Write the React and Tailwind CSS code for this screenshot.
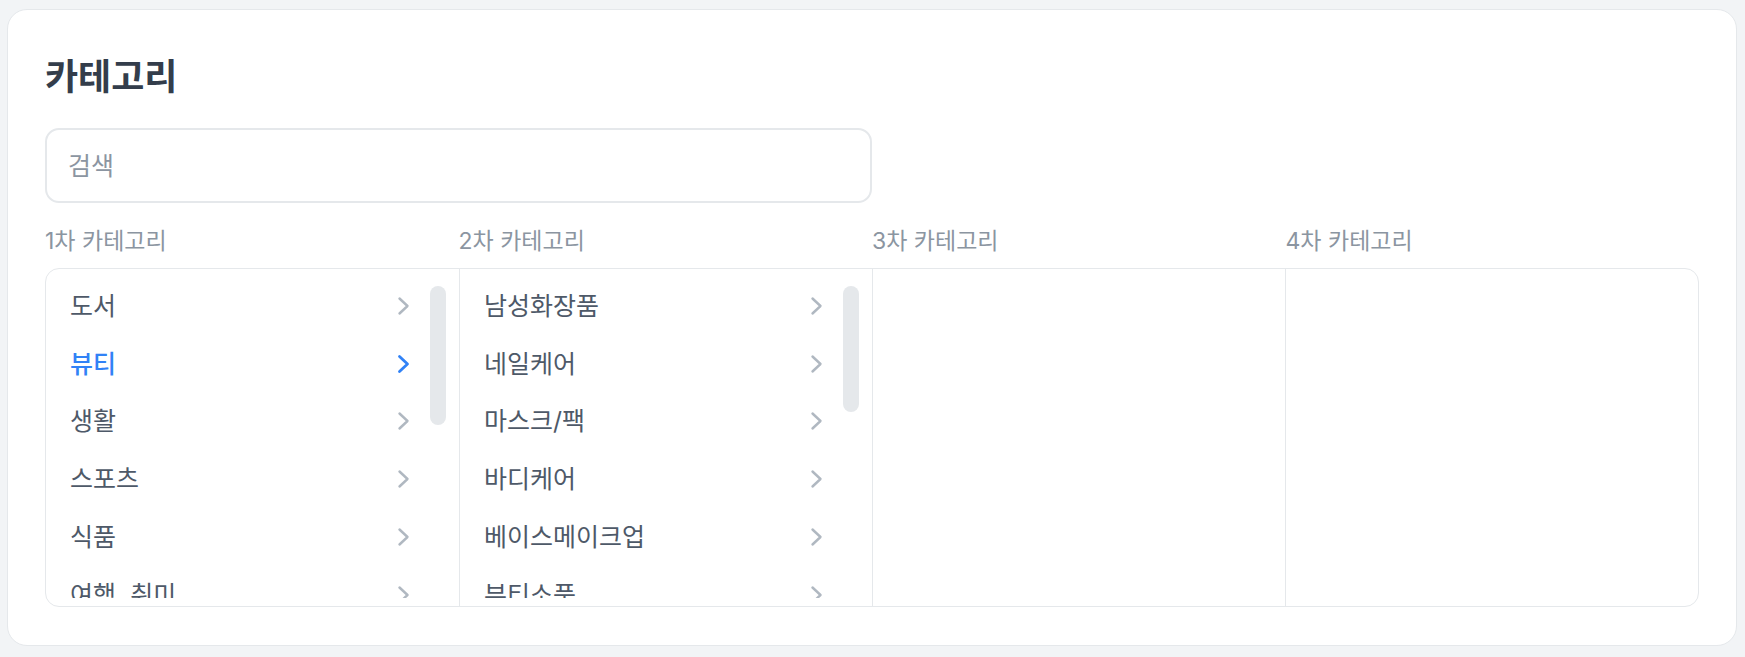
import React from "react";

const col1 = ["도서", "뷰티", "생활", "스포츠", "식품", "여행, 취미", "가전, 디지털", "패션의류", "패션잡화", "출산, 육아", "반려동물", "자동차용품"];
const col2 = ["남성화장품", "네일케어", "마스크/팩", "바디케어", "베이스메이크업", "뷰티소품", "색조메이크업", "선케어", "스킨케어", "클렌징", "향수", "헤어케어", "뷰티기기"];

function Chevron({ active }) {
  return (
    <svg width="14" height="20" viewBox="0 0 14 20" fill="none" className="shrink-0">
      <polyline
        points="2.5,2.5 10.5,10 2.5,17.5"
        stroke={active ? "#3182f6" : "#b0b8c1"}
        strokeWidth={active ? 2.8 : 2.4}
        strokeLinecap="round"
        strokeLinejoin="round"
      />
    </svg>
  );
}

function Column({ items, activeIndex, thumbH, first }) {
  return (
    <div className={first ? "flex min-w-0 min-h-0 h-full" : "flex min-w-0 min-h-0 h-full border-l border-[#e5e8eb]"}>
      <div className="flex-1 min-w-0 min-h-0 my-2 overflow-hidden">
        {items.map((it, i) => {
          const active = i === activeIndex;
          return (
            <div key={it} className="h-[57.8px] flex items-center justify-between pl-6 pr-2">
              <span
                className={
                  active
                    ? "text-[25px] leading-[32px] font-medium text-[#3182f6] whitespace-nowrap"
                    : "text-[25px] leading-[32px] text-[#4e5968] whitespace-nowrap"
                }
              >
                {it}
              </span>
              <Chevron active={active} />
            </div>
          );
        })}
      </div>
      <div className="w-[40px] shrink-0 pl-[11px] pt-[17px]">
        <div className="w-4 rounded-full bg-[#e5e8eb]" style={{ height: thumbH }} />
      </div>
    </div>
  );
}

export default function App() {
  const labels = ["1차 카테고리", "2차 카테고리", "3차 카테고리", "4차 카테고리"];
  return (
    <div className="min-h-screen bg-[#f2f4f6] pt-[9px] pl-[7px] pr-[8px] pb-[11px] font-['Inter','Noto_Sans_CJK_KR',sans-serif]">
      <div className="bg-white border border-[#e5e8eb] rounded-[20px] px-[37px] pt-[37px] pb-[38px]">
        <h1 className="mt-[8px] text-[36px] leading-[44px] font-bold text-[#333d4b]">카테고리</h1>
        <div className="mt-[29px] w-1/2 h-[75px] border-2 border-[#e5e8eb] rounded-[14px] flex items-center pl-[21px]">
          <span className="text-[25px] leading-[32px] text-[#8b95a1]">검색</span>
        </div>
        <div className="mt-[23px] grid grid-cols-4">
          {labels.map((l) => (
            <div key={l} className="text-[23px] leading-[30px] text-[#8b95a1]">{l}</div>
          ))}
        </div>
        <div className="mt-[12px] h-[339px] border border-[#e5e8eb] rounded-[14px] grid grid-cols-4 grid-rows-1 overflow-hidden">
          <Column items={col1} activeIndex={1} thumbH={139} first />
          <Column items={col2} activeIndex={-1} thumbH={126} />
          <div className="border-l border-[#e5e8eb]" />
          <div className="border-l border-[#e5e8eb]" />
        </div>
      </div>
    </div>
  );
}
